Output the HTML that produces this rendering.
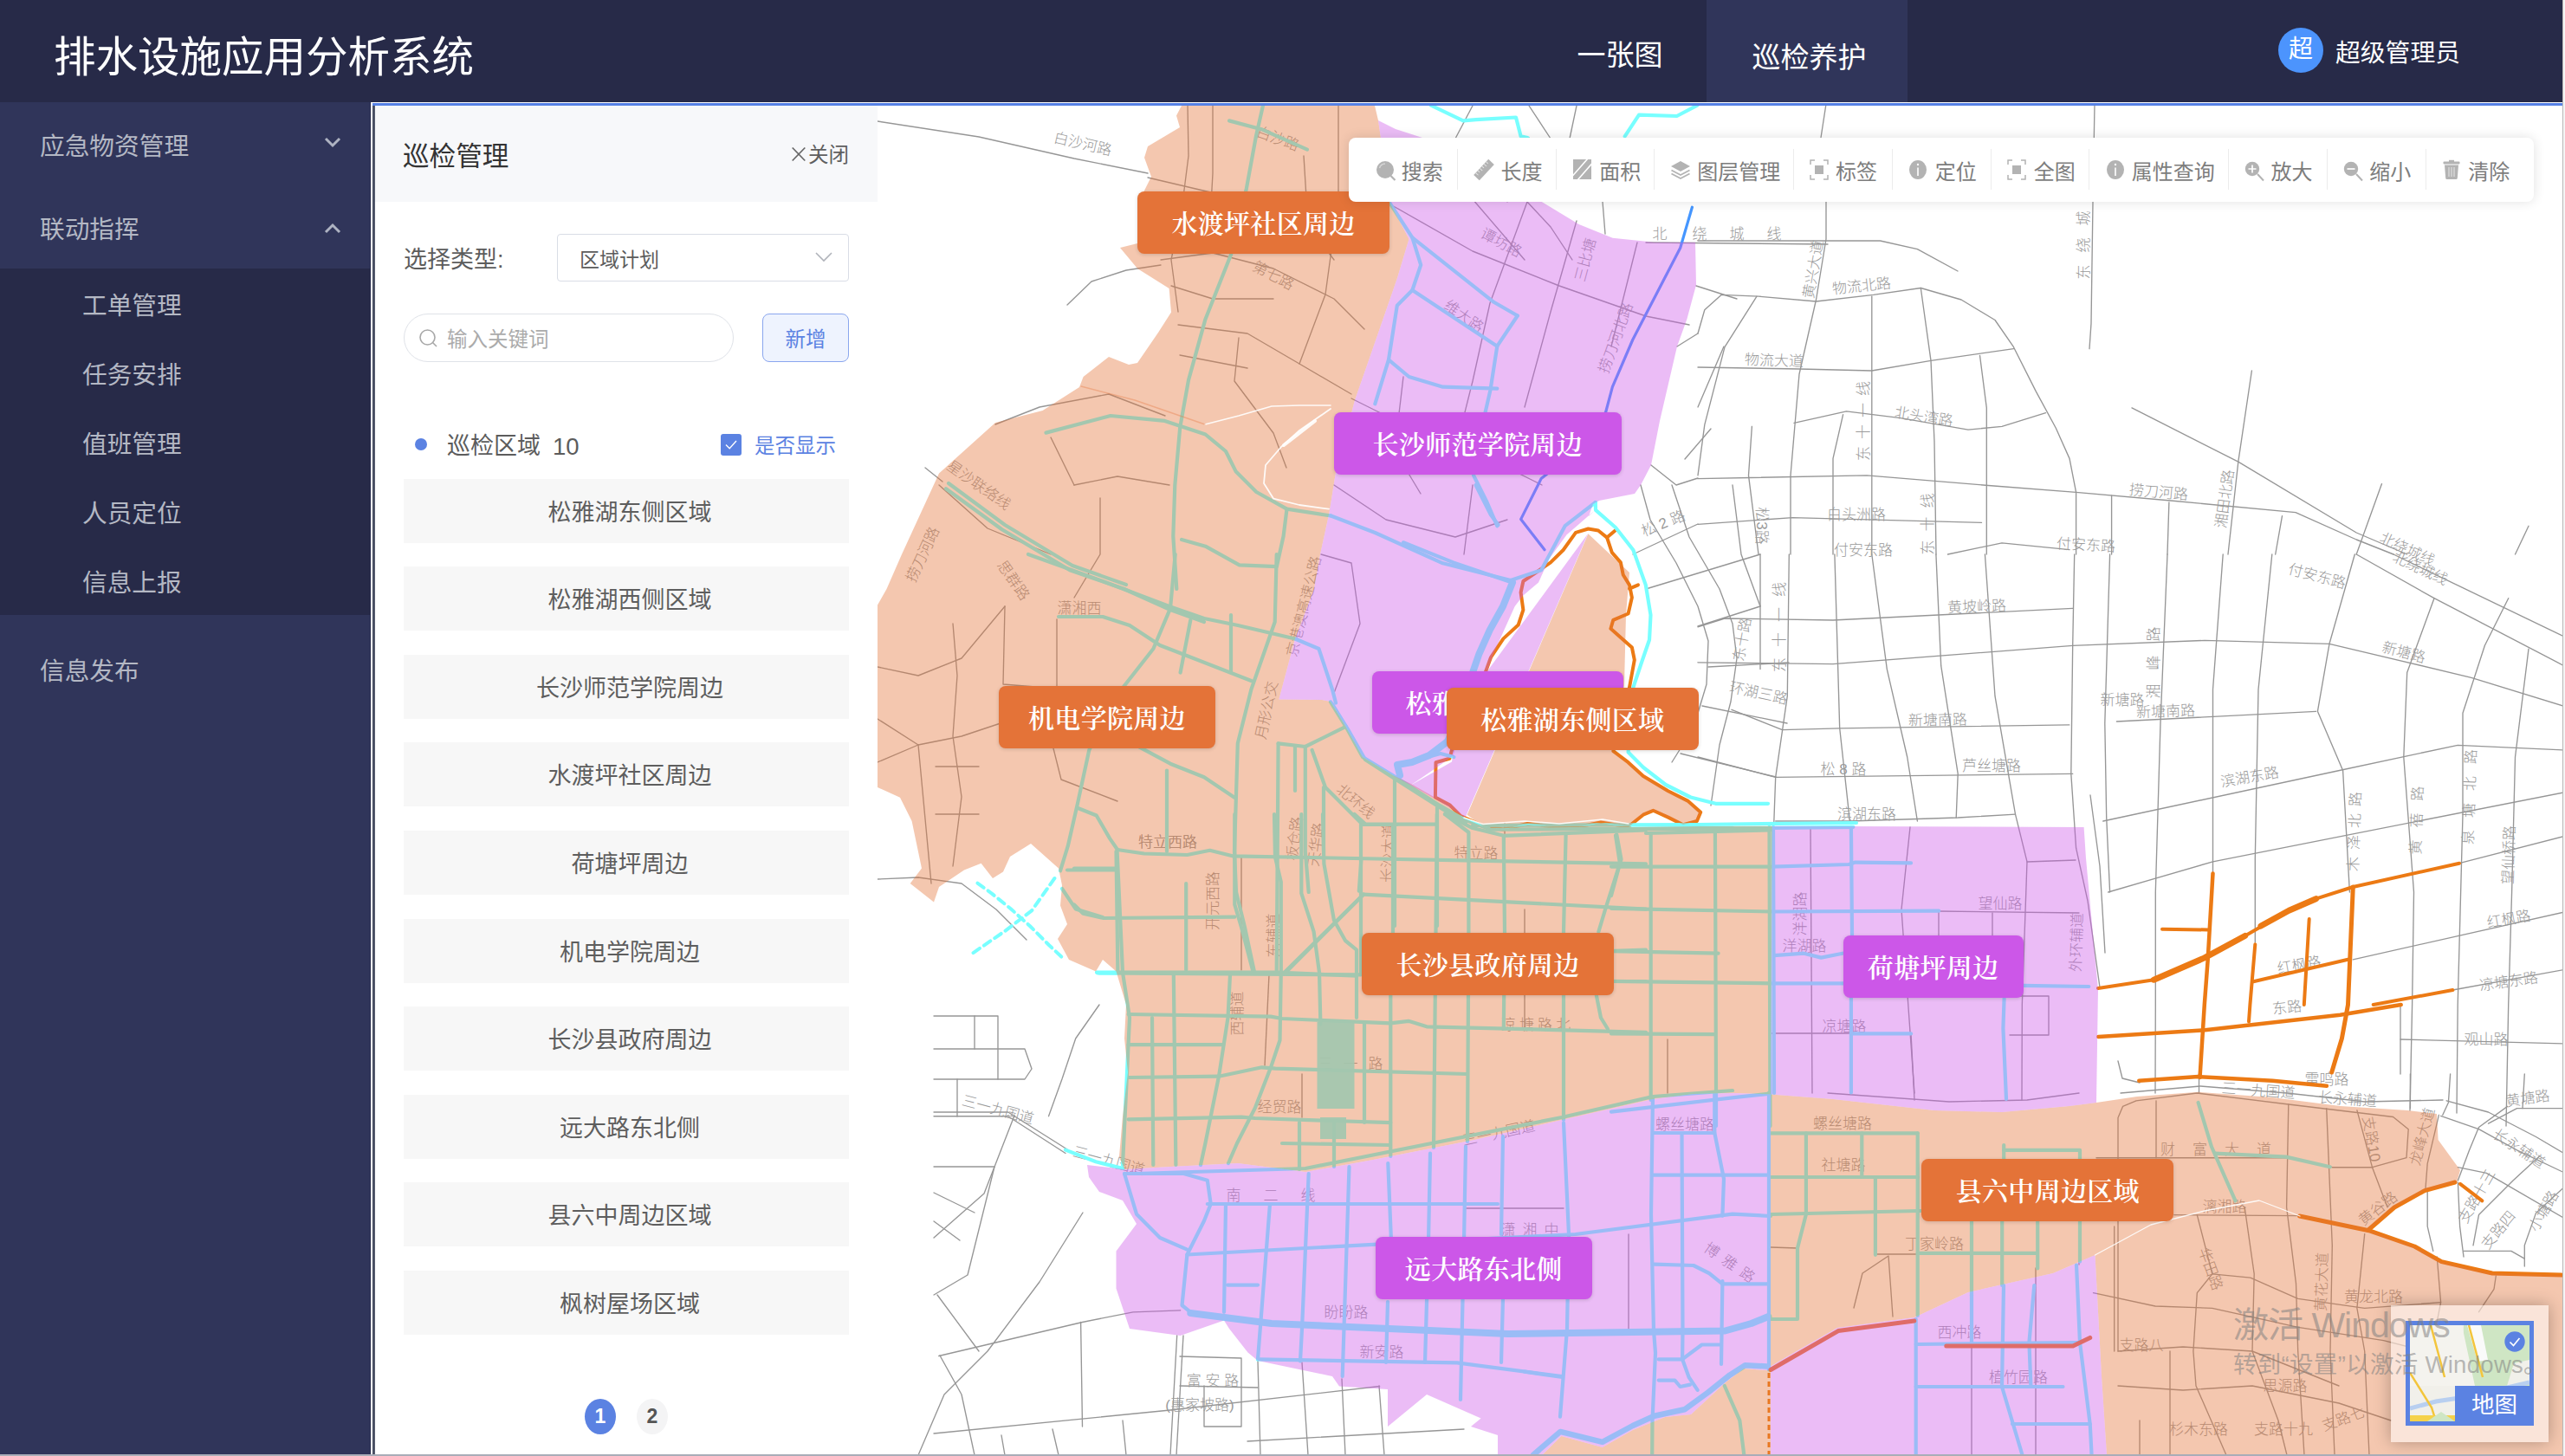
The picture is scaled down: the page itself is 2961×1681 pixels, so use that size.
<!DOCTYPE html>
<html lang="zh-CN">
<head>
<meta charset="utf-8">
<title>排水设施应用分析系统</title>
<style>
*{box-sizing:border-box;margin:0;padding:0}
html,body{width:2961px;height:1681px;overflow:hidden;background:#fff}
body{position:relative;font-family:"Liberation Sans","Noto Sans CJK SC",sans-serif;color:#333}
.abs{position:absolute}
#hdr{position:absolute;left:0;top:0;width:2958px;height:118px;background:#272a48}
#hdr .title{position:absolute;left:62px;top:0;height:118px;line-height:133px;font-size:48.5px;color:#fff;white-space:nowrap}
#hdr .nav{position:absolute;top:0;height:118px;line-height:127px;font-size:33px;color:#fff;text-align:center;white-space:nowrap}
#hdr .nav.on{background:#30355a}
#hdr .ava{position:absolute;left:2630px;top:32px;width:52px;height:52px;border-radius:50%;background:#4c94fd;color:#fff;font-size:28px;line-height:50px;text-align:center}
#hdr .uname{position:absolute;left:2696px;top:32px;height:52px;line-height:59px;font-size:28.8px;color:#fff;white-space:nowrap}
#rstrip{position:absolute;left:2958px;top:0;width:3px;height:1681px;background:#f4f4f4;border-left:1px solid #b8b8b8}
#side{position:absolute;left:0;top:118px;width:427px;height:1563px;background:#30355a}
#sidee{position:absolute;left:427px;top:118px;width:1px;height:1563px;background:#272b4d}
#side .sub{position:absolute;left:0;top:192px;width:427px;height:400px;background:#272a48}
#side .it{position:absolute;left:46px;font-size:28.7px;color:#b4b8c4;height:40px;line-height:44px;white-space:nowrap}
#side .it.s{left:95px}
#side svg{position:absolute}
#bluebar{position:absolute;left:430px;top:119px;width:2528px;height:3px;background:#5580e5}
#vline{position:absolute;left:430px;top:122px;width:3px;height:1559px;background:linear-gradient(90deg,#3f4559,#5b6174)}
#panel{position:absolute;left:433px;top:122px;width:580px;height:1559px;background:#fff}
#panel .ph{position:absolute;left:0;top:0;width:580px;height:111px;background:#f7f8fa}
#panel .pt{position:absolute;left:32px;top:33px;font-size:30.6px;line-height:50px;color:#333;white-space:nowrap}
#panel .pc{position:absolute;left:500px;top:36px;font-size:23.5px;line-height:42px;color:#5f5f5f;white-space:nowrap}
.lbl{position:absolute;white-space:nowrap}
#sel{position:absolute;left:210px;top:148px;width:337px;height:55px;border:1px solid #d9dde6;border-radius:4px;background:#fff}
#sel span{position:absolute;left:25px;top:0;line-height:58px;font-size:23px;color:#5c5c5c}
#srch{position:absolute;left:33px;top:240px;width:381px;height:56px;border:1px solid #dfe2e8;border-radius:28px;background:#fff}
#srch span{position:absolute;left:49px;top:0;line-height:59px;font-size:23.5px;color:#ababab}
#addb{position:absolute;left:447px;top:240px;width:100px;height:56px;border:1px solid #8aa6ee;border-radius:8px;background:#eef3fe;color:#5b82e2;font-size:23.5px;line-height:59px;text-align:center}
.li{position:absolute;left:33px;width:514px;height:74.2px;background:#f7f7f7;color:#5e5e5e;font-size:27px;line-height:79px;text-align:center;padding-left:8px;white-space:nowrap}
.pg{position:absolute;width:36px;height:41px;border-radius:50%;font-size:23px;font-weight:bold;line-height:41px;text-align:center;font-family:"Liberation Sans","DejaVu Sans",sans-serif}
#bline{position:absolute;left:0;top:1679px;width:2958px;height:2px;background:#a9adb8}
#map{position:absolute;left:1013px;top:122px;width:1945px;height:1558px;overflow:hidden;background:#fff}
#tb{position:absolute;left:1557px;top:159px;width:1368px;height:73.5px;background:#fff;border-radius:8px;box-shadow:0 0 14px rgba(0,0,0,.12)}
#tb .ti{position:absolute;top:0;height:73.5px;font-size:24px;color:#7d7d7d;line-height:79px;white-space:nowrap}
#tb .sp{position:absolute;top:13px;width:1px;height:47px;background:#ececec}
.ml{position:absolute;height:72px;border-radius:8px;color:#fff;font-family:"Liberation Serif","Noto Serif CJK SC",serif;font-weight:600;font-size:30px;line-height:76px;text-align:center;white-space:nowrap;box-shadow:0 1px 4px rgba(0,0,0,.16);letter-spacing:0.3px}
.ml.o{background:#e47338}
.ml.p{background:#cc57e8}
</style>
</head>
<body>
<div id="hdr">
  <div class="title">排水设施应用分析系统</div>
  <div class="nav" style="left:1770px;width:200px">一张图</div>
  <div class="nav on" style="left:1970px;width:232px;padding-left:5px;line-height:134px">巡检养护</div>
  <div class="ava">超</div>
  <div class="uname">超级管理员</div>
</div>
<div id="rstrip"></div>
<div id="side">
  <div class="sub"></div>
  <div class="it" style="top:29px">应急物资管理</div>
  <svg style="left:374px;top:40px" width="20" height="14" viewBox="0 0 20 14"><path d="M2 2 L10 10 L18 2" fill="none" stroke="#aeb3c2" stroke-width="3"/></svg>
  <div class="it" style="top:125px">联动指挥</div>
  <svg style="left:374px;top:138px" width="20" height="14" viewBox="0 0 20 14"><path d="M2 12 L10 4 L18 12" fill="none" stroke="#aeb3c2" stroke-width="3"/></svg>
  <div class="it s" style="top:213px">工单管理</div>
  <div class="it s" style="top:293px">任务安排</div>
  <div class="it s" style="top:373px">值班管理</div>
  <div class="it s" style="top:453px">人员定位</div>
  <div class="it s" style="top:533px">信息上报</div>
  <div class="it" style="top:635px">信息发布</div>
</div>
<div id="sidee"></div>
<div id="bluebar"></div>
<div id="vline"></div>
<div id="panel">
  <div class="ph"></div>
  <div class="pt">巡检管理</div>
  <svg style="position:absolute;left:480px;top:47px" width="18" height="18" viewBox="0 0 18 18"><path d="M1.7 1.5 L16.3 16.5 M16.3 1.5 L1.7 16.5" stroke="#666" stroke-width="1.7" fill="none"/></svg><div class="pc">关闭</div>
  <div class="lbl" style="left:33px;top:156px;font-size:27px;line-height:45px;color:#5c5c5c">选择类型:</div>
  <div id="sel"><span>区域计划</span>
    <svg style="position:absolute;left:295.6px;top:19.3px" width="22" height="14" viewBox="0 0 22 14"><path d="M2 2 L11 11 L20 2" fill="none" stroke="#b0b3ba" stroke-width="1.6"/></svg>
  </div>
  <div id="srch">
    <svg style="position:absolute;left:16px;top:16px" width="24" height="24" viewBox="0 0 24 24"><circle cx="10.5" cy="10.5" r="8.5" fill="none" stroke="#a8a8a8" stroke-width="1.6"/><path d="M16.5 16.5 L21 21" stroke="#a8a8a8" stroke-width="1.6"/></svg>
    <span>输入关键词</span></div>
  <div id="addb">新增</div>
  <div class="abs" style="left:46px;top:384px;width:14px;height:14px;border-radius:50%;background:#5b82e2"></div>
  <div class="lbl" style="left:83px;top:372px;font-size:27px;line-height:43px;color:#5c5c5c">巡检区域</div>
  <div class="lbl" style="left:205px;top:372px;font-size:27.5px;line-height:43px;color:#5c5c5c">10</div>
  <div class="abs" style="left:399px;top:379px;width:24px;height:25px;border-radius:3px;background:#5b82e2">
    <svg style="position:absolute;left:3px;top:4px" width="18" height="17" viewBox="0 0 18 17"><path d="M3 8.5 L7.2 12.8 L15 4" fill="none" stroke="#fff" stroke-width="1.4"/></svg>
  </div>
  <div class="lbl" style="left:438px;top:372px;font-size:23.5px;line-height:43px;color:#5b82e2">是否显示</div>
  <div class="li" style="top:430.5px">松雅湖东侧区域</div>
  <div class="li" style="top:532.1px">松雅湖西侧区域</div>
  <div class="li" style="top:633.7px">长沙师范学院周边</div>
  <div class="li" style="top:735.3px">水渡坪社区周边</div>
  <div class="li" style="top:836.9px">荷塘坪周边</div>
  <div class="li" style="top:938.5px">机电学院周边</div>
  <div class="li" style="top:1040.1px">长沙县政府周边</div>
  <div class="li" style="top:1141.7px">远大路东北侧</div>
  <div class="li" style="top:1243.3px">县六中周边区域</div>
  <div class="li" style="top:1344.9px">枫树屋场区域</div>
  <div class="pg" style="left:242px;top:1493px;background:#5b82e2;color:#fff">1</div>
  <div class="pg" style="left:302px;top:1493px;background:#f4f4f5;color:#555">2</div>
</div>
<div id="map">
<svg style="position:absolute;left:0;top:0" width="1945" height="1558" viewBox="1013 122 1945 1558" fill="none" stroke-linecap="round" stroke-linejoin="round">
<g stroke="#969696" stroke-width="1.35">
<polyline points="2108.0,120.0 2102.0,159.0 2108.0,233.0 2108.0,276.0 2096.5,346.0 2077.0,432.0 2067.0,549.0 2067.0,640.0" />
<polyline points="2418.0,120.0 2416.0,233.0 2414.0,373.4 2412.0,402.7" />
<polyline points="1960.0,278.0 2170.5,278.0 2213.4,287.6 2260.0,313.0" />
<polyline points="1960.0,385.0 1967.8,357.8 1987.3,340.3 2030.0,342.2 2096.5,348.0 2162.7,340.3 2217.3,332.5 2264.0,346.0 2303.0,369.5 2324.5,400.7 2350.0,451.4 2373.3,494.3 2389.0,529.4 2396.6,568.3 2396.6,640.0" />
<polyline points="1960.0,424.0 2077.0,426.0 2160.8,428.0 2229.0,416.3 2324.5,402.7" />
<polyline points="2160.8,342.2 2160.8,640.0" />
<polyline points="2217.3,332.5 2229.0,416.3 2233.0,510.0 2235.0,640.0" />
<polyline points="2285.5,410.4 2293.3,470.9 2293.3,640.0" />
<polyline points="2071.0,488.4 2131.5,474.8 2194.0,482.6 2272.0,496.2 2311.0,492.3 2361.6,476.7" />
<polyline points="1960.0,552.7 2155.0,548.8 2295.3,560.5 2396.6,568.3 2505.8,578.0 2650.0,591.7 2720.2,623.0 2763.0,640.0" />
<polyline points="1960.0,605.4 2069.2,597.6 2287.5,603.4" />
<polyline points="2028.0,342.2 1991.0,400.7 1967.8,490.4 1960.0,548.8" />
<polyline points="2022.4,492.3 2018.5,548.8 2030.0,640.0" />
<polyline points="2127.6,478.7 2116.0,529.4 2116.0,640.0" />
<polyline points="2461.0,470.9 2583.8,533.2 2720.2,615.0 2778.7,640.0" />
<polyline points="2599.4,428.0 2583.8,533.2 2572.0,640.0" />
<polyline points="2749.5,558.6 2720.2,640.0" />
<polyline points="2437.6,572.2 2437.6,640.0" />
<polyline points="2503.9,580.0 2502.0,640.0" />
<polyline points="2634.5,595.6 2626.7,640.0" />
<polyline points="2919.0,607.3 2903.5,640.0" />
<polyline points="2248.5,640.0 2311.0,626.8 2389.0,634.6" />
<polyline points="1960.0,723.8 1991.0,714.0 2116.0,716.0 2392.7,702.4" />
<polyline points="1960.0,764.8 2116.0,766.7 2392.7,745.3 2544.8,739.4 2689.0,743.3 2852.8,782.3 2960.0,815.4" />
<polyline points="1999.0,819.3 2057.5,842.7 2123.7,840.8 2388.8,836.9" />
<polyline points="2443.4,833.0 2673.5,821.3" />
<polyline points="1960.0,874.0 2049.7,897.3 2392.7,893.4" />
<polyline points="2049.7,948.0 2135.4,948.0 2260.2,944.0 2326.5,940.2" />
<polyline points="2032.0,640.0 2032.0,772.6" />
<polyline points="2065.3,640.0 2063.3,803.7 2049.7,897.3 2047.7,952.0" />
<polyline points="2117.9,640.0 2123.7,840.8 2135.4,948.0" />
<polyline points="2160.8,640.0 2178.3,772.6 2201.7,874.0 2213.4,948.0" />
<polyline points="2234.9,640.0 2240.7,768.7 2260.2,893.4 2258.2,944.0" />
<polyline points="2291.4,640.0 2303.0,803.7 2326.5,940.2 2340.0,994.8 2334.3,1160.0 2334.0,1270.0" />
<polyline points="2394.7,640.0 2392.7,745.3 2390.8,893.4 2396.6,979.2" />
<polyline points="2435.6,640.0 2429.8,835.0 2431.7,944.0 2435.6,1030.0" />
<polyline points="2502.0,640.0 2494.0,835.0 2488.3,1030.0 2488.3,1160.0 2488.0,1262.0" />
<polyline points="2566.2,640.0 2554.5,796.0 2554.5,1006.5" />
<polyline points="2622.8,640.0 2607.0,796.0 2603.3,991.0 2603.3,1088.0" />
<polyline points="2718.3,640.0 2689.0,743.3 2675.4,821.3 2704.6,889.5 2712.4,1030.0" />
<polyline points="2810.0,690.7 2778.7,776.5 2774.8,874.0 2786.5,1030.0 2784.6,1160.0 2782.0,1282.0" />
<polyline points="2895.7,690.7 2868.4,745.3 2843.0,823.2 2843.0,940.2 2837.2,1160.0 2836.0,1285.0" />
<polyline points="2919.0,749.2 2903.5,874.0 2899.6,1030.0 2895.7,1160.0 2893.0,1300.0" />
<polyline points="2720.2,640.0 2810.0,690.7 2960.0,768.7" />
<polyline points="2763.0,640.0 2960.0,735.0" />
<polyline points="2427.8,948.0 2700.7,889.5 2837.2,860.3 2960.0,866.0" />
<polyline points="2433.7,1030.0 2554.5,994.8 2712.4,963.6 2960.0,914.8" />
<polyline points="2839.0,996.7 2960.0,965.5" />
<polyline points="2716.3,1107.8 2960.0,1053.0" />
<polyline points="2831.4,1143.0 2960.0,1119.5" />
<polyline points="2396.6,979.2 2410.0,1040.0 2424.0,1140.0" />
<polyline points="2413.0,918.0 2424.0,1000.0 2430.0,1100.0" />
<polyline points="2445.0,1225.0 2450.0,1245.0 2470.0,1250.0" />
<polyline points="2817.6,1288.4 2861.5,1303.7 2905.5,1327.9 2961.0,1354.3" />
<polyline points="2824.2,1270.8 2872.5,1284.0 2927.5,1312.5 2961.0,1332.3" />
<polyline points="2837.4,1347.7 2870.3,1354.3 2961.0,1407.0" />
<polyline points="2894.5,1277.4 2861.5,1301.5 2850.5,1327.9 2837.4,1363.0" />
<polyline points="2961.0,1279.6 2905.5,1279.6 2872.5,1297.1" />
<polyline points="2931.9,1334.5 2901.0,1363.0 2861.5,1402.6 2855.0,1437.8" />
<polyline points="2961.0,1369.7 2927.5,1400.4 2914.3,1437.8 2914.3,1462.0" />
<polyline points="2802.2,1371.9 2802.2,1415.8 2808.8,1444.4" />
<polyline points="2837.4,1365.3 2839.6,1415.8 2844.0,1451.0" />
<polyline points="2844.0,1444.4 2898.9,1444.4 2914.3,1453.2" />
<polyline points="2782.4,1240.0 2782.4,1279.6" />
<polyline points="2828.6,1240.0 2826.4,1273.0 2819.8,1287.3" />
<polyline points="2914.3,1240.0 2912.0,1279.6" />
<polyline points="2771.0,1200.0 2960.0,1205.0" />
<polyline points="2771.0,1160.0 2771.0,1240.0" />
<polyline points="2448.0,1262.0 2540.0,1254.0 2640.0,1262.0 2730.0,1272.0 2820.0,1270.0" />
<polyline points="1894.0,560.0 1905.0,600.0 1935.0,650.0 1960.0,700.0 1972.0,740.0 1970.0,790.0 1955.0,840.0 1930.0,880.0" />
<polyline points="1930.0,560.0 1950.0,620.0 1985.0,680.0 2000.0,720.0 2005.0,760.0 1998.0,810.0 1985.0,860.0 1975.0,930.0" />
<polyline points="1885.0,640.0 1960.0,605.0" />
<polyline points="1900.0,680.0 2032.0,640.0" />
<polyline points="1960.0,723.0 2032.0,700.0" />
<polyline points="1972.0,770.0 2065.0,765.0" />
<polyline points="1965.0,815.0 2063.0,835.0" />
<polyline points="1940.0,870.0 2050.0,897.0" />
<polyline points="2000.0,560.0 2010.0,640.0 2032.0,700.0" />
<polyline points="1078.0,1288.7 1163.7,1288.7 1230.0,1331.5" />
<polyline points="1078.0,1284.0 1163.7,1284.0 1232.0,1327.0" />
<polyline points="1269.0,1160.0 1241.7,1199.0 1226.0,1245.8 1210.5,1288.7" />
<polyline points="1083.8,1565.5 1249.5,1526.5 1308.0,1514.8 1362.6,1512.8" />
<polyline points="1078.0,1655.0 1351.0,1628.0 1592.6,1600.5" />
<polyline points="1358.7,1542.0 1351.0,1680.0" />
<polyline points="1366.0,1542.0 1358.0,1680.0" />
<polyline points="1247.6,1526.5 1249.5,1647.0" />
<polyline points="1078.0,1347.0 1148.0,1347.0 1117.0,1472.0 1078.0,1495.0" />
<polyline points="1171.0,1288.0 1136.0,1378.0 1078.0,1429.0" />
<polyline points="1078.0,1173.0 1152.0,1173.0 1152.0,1246.0 1105.0,1246.0 1105.0,1289.0" />
<polyline points="1078.0,1211.0 1183.0,1211.0 1191.0,1234.0 1183.0,1246.0 1152.0,1246.0" />
<polyline points="1125.0,1173.0 1125.0,1211.0" />
<polyline points="1078.0,1246.0 1105.0,1246.0" />
<polyline points="1078.0,1377.0 1125.0,1400.0" />
<polyline points="1078.0,1410.0 1108.0,1432.0" />
<polyline points="1082.0,1495.0 1130.0,1560.0" />
<polyline points="1085.0,1565.0 1110.0,1610.0 1125.0,1680.0" />
<polyline points="1156.0,1657.0 1160.0,1680.0" />
<polyline points="1215.0,1650.0 1222.0,1680.0" />
<polyline points="1296.0,1640.0 1300.0,1680.0" />
<polyline points="1362.0,1566.0 1433.0,1568.0 1433.0,1647.0 1390.0,1647.0 1390.0,1600.0" />
<polyline points="1362.0,1600.0 1452.0,1602.0" />
<polyline points="1452.0,1571.0 1455.0,1680.0" />
<polyline points="1503.0,1573.0 1510.0,1680.0" />
<polyline points="1549.0,1592.0 1553.0,1680.0" />
<polyline points="1592.0,1600.0 1598.0,1680.0" />
<polyline points="1440.0,1664.0 1690.0,1650.0" />
<polyline points="1013.0,1015.0 1060.0,1013.0 1110.0,1020.0 1150.0,1050.0 1185.0,1085.0" />
<polyline points="1060.0,1680.0 1090.0,1610.0 1140.0,1560.0 1200.0,1480.0 1250.0,1400.0" />
<polyline points="1013.0,140.0 1130.0,158.0 1240.0,183.0 1325.0,200.0" />
<polyline points="1232.0,352.0 1260.0,325.0 1300.0,312.0 1340.0,306.0" />
<polyline points="1068.0,540.0 1088.0,556.0" />
<polyline points="1700.0,122.0 1680.0,160.0" />
<polyline points="1765.0,122.0 1790.0,160.0" />
<polyline points="1820.0,122.0 1812.0,160.0" />
<polyline points="1763.0,233.0 1790.0,262.0 1815.0,300.0" />
<polyline points="1850.0,233.0 1853.0,270.0" />
<polyline points="1765.0,159.0 1740.0,233.0" />
<polyline points="1900.0,280.0 2110.0,282.0" />
<polyline points="1958.0,330.0 2005.0,345.0" />
<polyline points="1936.0,400.0 1960.0,385.0" />
<polyline points="1990.0,400.0 1960.0,470.0" />
<polyline points="1975.0,495.0 1945.0,530.0" />
<polyline points="1906.0,537.0 1935.0,560.0 1960.0,552.0" />
<polyline points="1371.0,122.0 1372.0,180.0 1365.0,235.0 1352.0,300.0 1360.0,360.0" />
<polyline points="1400.0,122.0 1400.0,200.0 1395.0,290.0" />
<polyline points="1505.0,180.0 1510.0,260.0 1540.0,300.0" />
<polyline points="1545.0,122.0 1545.0,230.0 1530.0,340.0 1500.0,420.0" />
<polyline points="1325.0,205.0 1440.0,232.0 1587.0,262.0" />
<polyline points="1340.0,300.0 1400.0,292.0 1470.0,310.0 1540.0,345.0 1575.0,380.0" />
<polyline points="1352.0,330.0 1400.0,345.0 1470.0,345.0" />
<polyline points="1360.0,375.0 1440.0,385.0 1500.0,420.0 1560.0,455.0" />
<polyline points="1362.0,410.0 1440.0,425.0" />
<polyline points="1430.0,390.0 1425.0,440.0 1470.0,500.0 1485.0,540.0" />
<polyline points="1149.0,490.0 1200.0,470.0 1280.0,455.0 1345.0,480.0" />
<polyline points="1213.0,505.0 1240.0,560.0" />
<polyline points="1240.0,560.0 1290.0,550.0 1350.0,560.0" />
<polyline points="1270.0,575.0 1270.0,640.0 1240.0,690.0" />
<polyline points="1084.0,560.0 1140.0,610.0 1213.0,640.0" />
<polyline points="1013.0,770.0 1060.0,780.0 1110.0,760.0 1160.0,700.0" />
<polyline points="1013.0,880.0 1060.0,860.0 1110.0,850.0 1170.0,830.0" />
<polyline points="1100.0,720.0 1105.0,780.0 1100.0,850.0 1110.0,920.0 1100.0,1000.0" />
<polyline points="1160.0,700.0 1158.0,790.0 1220.0,795.0" />
<polyline points="1220.0,715.0 1220.0,795.0 1290.0,800.0" />
<polyline points="1060.0,860.0 1075.0,1020.0" />
<polyline points="1013.0,830.0 1060.0,860.0" />
<polyline points="1080.0,885.0 1130.0,885.0" />
<polyline points="1080.0,940.0 1130.0,940.0" />
<polyline points="1215.0,860.0 1225.0,900.0 1290.0,925.0" />
<polyline points="1433.0,990.0 1433.0,1120.0" />
<polyline points="1465.0,1125.0 1460.0,1230.0" />
<polyline points="1503.0,1240.0 1503.0,1290.0" />
<polyline points="1737.0,950.0 1737.0,1000.0" />
<polyline points="1925.0,1200.0 1925.0,1262.0" />
<polyline points="1760.0,1050.0 1760.0,1190.0" />
<polyline points="1690.0,1395.0 1805.0,1395.0" />
<polyline points="1880.0,1425.0 1880.0,1540.0" />
<polyline points="1605.0,236.0 1700.0,290.0 1800.0,330.0 1900.0,365.0 1950.0,375.0" />
<polyline points="1763.0,233.0 1720.0,350.0 1700.0,440.0 1680.0,520.0" />
<polyline points="1640.0,160.0 1700.0,230.0 1760.0,300.0" />
<polyline points="1820.0,255.0 1790.0,360.0 1760.0,470.0" />
<polyline points="1890.0,280.0 1860.0,400.0" />
<polyline points="1560.0,460.0 1620.0,490.0 1700.0,520.0 1780.0,560.0" />
<polyline points="1620.0,435.0 1610.0,520.0 1640.0,570.0" />
<polyline points="1540.0,560.0 1600.0,600.0 1680.0,620.0 1740.0,600.0" />
<polyline points="1700.0,560.0 1690.0,640.0" />
<polyline points="1525.0,640.0 1560.0,650.0 1570.0,720.0 1540.0,800.0" />
<polyline points="2090.0,955.0 2092.0,1262.0" />
<polyline points="2205.0,955.0 2195.0,1050.0 2210.0,1262.0" />
<polyline points="2238.0,1052.0 2238.0,1080.0" />
<polyline points="2238.0,1052.0 2400.0,1054.0" />
<polyline points="2300.0,1054.0 2300.0,1080.0" />
<polyline points="2045.0,1193.0 2137.0,1193.0" />
<polyline points="2206.0,1193.0 2210.0,1270.0" />
<polyline points="2340.0,995.0 2396.0,993.0" />
<polyline points="2320.0,1150.0 2365.0,1150.0 2365.0,1195.0 2320.0,1195.0" />
<polyline points="2110.0,1262.0 2250.0,1272.0 2340.0,1270.0 2400.0,1262.0" />
<polyline points="2445.0,1560.0 2445.0,1290.5 2450.5,1277.4 2466.0,1270.8 2536.3,1262.0 2641.8,1275.0 2762.6,1289.5 2780.2,1303.7 2778.0,1336.7 2738.5,1347.7 2692.3,1347.7 2641.8,1336.7 2488.0,1336.7 2420.0,1336.7" />
<polyline points="2489.0,1270.8 2489.0,1336.7" />
<polyline points="2538.5,1240.0 2538.5,1262.0" />
<polyline points="2641.8,1275.0 2639.6,1393.8 2650.5,1481.8 2652.7,1560.0 2660.0,1680.0" />
<polyline points="2685.7,1279.6 2692.3,1437.8 2690.0,1560.0 2695.0,1680.0" />
<polyline points="2720.9,1281.8 2738.5,1347.7 2756.0,1393.8" />
<polyline points="2815.4,1287.3 2802.2,1343.3 2800.0,1371.9" />
<polyline points="2509.9,1402.6 2652.7,1403.7" />
<polyline points="2536.3,1402.6 2553.8,1470.8 2536.3,1492.7 2531.9,1560.0 2535.0,1600.0 2570.0,1680.0" />
<polyline points="2591.2,1393.8 2602.2,1470.8 2600.0,1560.0 2630.0,1640.0 2640.0,1680.0" />
<polyline points="2553.8,1470.8 2597.8,1475.2 2652.7,1499.3 2729.7,1510.3 2817.6,1503.7" />
<polyline points="2416.5,1492.7 2488.0,1508.0 2553.8,1510.3 2652.7,1532.3 2751.6,1547.7 2800.0,1560.0" />
<polyline points="2729.7,1424.6 2720.9,1510.3 2729.7,1560.0 2735.0,1680.0" />
<polyline points="2813.2,1451.0 2817.6,1503.7 2806.6,1560.0" />
<polyline points="2881.3,1473.0 2879.0,1488.3 2861.5,1514.7" />
<polyline points="2440.7,1415.8 2440.7,1560.0" />
<polyline points="2445.0,1560.0 2520.0,1555.0 2600.0,1560.0 2700.0,1600.0" />
<polyline points="2445.0,1600.0 2520.0,1605.0 2600.0,1600.0 2700.0,1620.0 2760.0,1640.0" />
<polyline points="2505.0,1560.0 2505.0,1680.0" />
<polyline points="2470.0,1640.0 2470.0,1680.0" />
<polyline points="2400.0,1400.0 2400.0,1460.0" />
<polyline points="2044.0,1440.0 2075.0,1441.0" />
<polyline points="2140.0,1510.0 2150.0,1470.0 2180.0,1450.0 2185.0,1520.0" />
<polyline points="2164.9,1448.0 2280.0,1448.0" />
<polyline points="2350.0,1464.0 2350.0,1680.0" />
<polyline points="2276.0,1550.0 2276.0,1680.0" />
</g>
<g fill="#9a9a9a" stroke="none" font-size="17" font-weight="300" text-anchor="middle" font-family="Liberation Sans,Noto Sans CJK SC,sans-serif">
<text x="1916" y="276">北</text>
<text x="1962" y="276">绕</text>
<text x="2005" y="276">城</text>
<text x="2048" y="276">线</text>
<text x="2093" y="317" transform="rotate(-80 2093 311)">黄兴大道</text>
<text x="2149" y="336" transform="rotate(-6 2149 330)">物流北路</text>
<text x="2405" y="282" transform="rotate(-90 2405 276)" letter-spacing="14">东绕城</text>
<text x="2048" y="422" transform="rotate(2 2048 416)">物流大道</text>
<text x="2151" y="488" transform="rotate(-90 2151 482)" letter-spacing="8">东十一线</text>
<text x="2221" y="487" transform="rotate(9 2221 481)">北头湾路</text>
<text x="2143" y="600">白头洲路</text>
<text x="2151" y="641">付安东路</text>
<text x="2408" y="635" transform="rotate(3 2408 629)">付安东路</text>
<text x="2492" y="574" transform="rotate(5 2492 568)">捞刀河路</text>
<text x="2568" y="582" transform="rotate(-82 2568 576)">湘田北路</text>
<text x="2779" y="640" transform="rotate(25 2779 634)">北绕城线</text>
<text x="2034" y="613" transform="rotate(90 2034 607)">松3路</text>
<text x="2225" y="606" transform="rotate(-90 2225 600)" letter-spacing="10">东十线</text>
<text x="2282" y="706" transform="rotate(-2 2282 700)">黄坡岭路</text>
<text x="2675" y="671" transform="rotate(15 2675 665)">付安东路</text>
<text x="2794" y="662" transform="rotate(25 2794 656)">北绕城线</text>
<text x="2775" y="759" transform="rotate(15 2775 753)">新塘路</text>
<text x="2237" y="837" transform="rotate(-1 2237 831)">新塘南路</text>
<text x="2500" y="827" transform="rotate(-2 2500 821)">新塘南路</text>
<text x="2299" y="890">芦丝塘路</text>
<text x="2128" y="894">松 8 路</text>
<text x="2155" y="946">滨湖东路</text>
<text x="2597" y="903" transform="rotate(-10 2597 897)">滨湖东路</text>
<text x="2030" y="806" transform="rotate(12 2030 800)">环湖三路</text>
<text x="2054" y="724" transform="rotate(-90 2054 718)" letter-spacing="12">东十一线</text>
<text x="2011" y="744" transform="rotate(-80 2011 738)">东十路</text>
<text x="2486" y="763" transform="rotate(-90 2486 757)" letter-spacing="16">湘峰路</text>
<text x="2718" y="962" transform="rotate(-88 2718 956)" letter-spacing="8">木泽北路</text>
<text x="2790" y="946" transform="rotate(-88 2790 940)" letter-spacing="14">黄蓓路</text>
<text x="2851" y="919" transform="rotate(-88 2851 913)" letter-spacing="14">泉塘北路</text>
<text x="2309" y="1049">望仙路</text>
<text x="2083" y="1098">洋湖路</text>
<text x="2896" y="993" transform="rotate(-88 2896 987)">望仙桥路</text>
<text x="2896" y="1067" transform="rotate(-10 2896 1061)">红枫路</text>
<text x="2654" y="1120" transform="rotate(-10 2654 1114)">红枫路</text>
<text x="2896" y="1139" transform="rotate(-8 2896 1133)">凉塘东路</text>
<text x="2397" y="1094" transform="rotate(-88 2397 1088)">外环辅道</text>
<text x="2129" y="1191">凉塘路</text>
<text x="2078" y="1061" transform="rotate(-90 2078 1055)">洋湖路</text>
<text x="1250" y="172" transform="rotate(13 1250 166)">白沙河路</text>
<text x="1920" y="610" transform="rotate(-22 1920 604)">松 2 路</text>
<text x="2870" y="1206">观山路</text>
<text x="2918" y="1274" transform="rotate(-8 2918 1268)">黄塘路</text>
<text x="2640" y="1169" transform="rotate(-6 2640 1163)">东路</text>
<text x="1152" y="1287" transform="rotate(15 1152 1281)">三一九国道</text>
<text x="1280" y="1346" transform="rotate(15 1280 1340)">三一九国道</text>
<text x="1400" y="1600">富 安 路</text>
<text x="1385" y="1628">(惠家坡路)</text>
<text x="1348" y="978">特立西路</text>
<text x="1704" y="991">特立路</text>
<text x="1554" y="1521">盼盼路</text>
<text x="1595" y="1567">新安路</text>
<text x="1477" y="1284">经贸路</text>
<text x="2127" y="1303">螺丝塘路</text>
<text x="1945" y="1304">螺丝塘路</text>
<text x="2128" y="1351">社塘路</text>
<text x="2233" y="1442">丁家岭路</text>
<text x="2568" y="1333" letter-spacing="20">财富大道</text>
<text x="2568" y="1399">漓湘路</text>
<text x="2740" y="1503">黄龙北路</text>
<text x="2638" y="1606">思源路</text>
<text x="2472" y="1559">支路八</text>
<text x="2538" y="1656">杉木东路</text>
<text x="2636" y="1656">支路十九</text>
<text x="2705" y="1644" transform="rotate(-20 2705 1638)">支路七</text>
<text x="2552" y="1471" transform="rotate(70 2552 1465)">华田路</text>
<text x="2680" y="1486" transform="rotate(-88 2680 1480)">黄花大道</text>
<text x="2745" y="1401" transform="rotate(-38 2745 1395)">黄谷路</text>
<text x="2262" y="1544">西冲路</text>
<text x="2330" y="1596">植竹园路</text>
<text x="1775" y="1189" letter-spacing="4">凉塘路北</text>
<text x="1565" y="1234" letter-spacing="12">三一路</text>
<text x="1730" y="1314" transform="rotate(-12 1730 1308)">三一九国道</text>
<text x="1400" y="1046" transform="rotate(-90 1400 1040)">开元西路</text>
<text x="1470" y="1086" transform="rotate(-90 1470 1080)">东辅道</text>
<text x="1428" y="1176" transform="rotate(-90 1428 1170)">西辅道</text>
<text x="1494" y="974" transform="rotate(-82 1494 968)">板仓路</text>
<text x="1519" y="981" transform="rotate(-82 1519 975)">天华路</text>
<text x="1565" y="931" transform="rotate(40 1565 925)">北环线</text>
<text x="1602" y="991" transform="rotate(-88 1602 985)">长沙大道</text>
<text x="1462" y="826" transform="rotate(-78 1462 820)">月形公交</text>
<text x="1505" y="706" transform="rotate(-76 1505 700)">京港澳高速公路</text>
<text x="1246" y="708">潇湘西</text>
<text x="1348" y="978">特立西路</text>
<text x="1170" y="676" transform="rotate(55 1170 670)">思群路</text>
<text x="1065" y="646" transform="rotate(-65 1065 640)">捞刀河路</text>
<text x="1130" y="566" transform="rotate(35 1130 560)">星沙联络线</text>
<text x="2000" y="1466" transform="rotate(35 2000 1460)" letter-spacing="8">博雅路</text>
<text x="1733" y="286" transform="rotate(28 1733 280)">谭坊路</text>
<text x="1830" y="306" transform="rotate(-75 1830 300)">三比塘</text>
<text x="1690" y="371" transform="rotate(35 1690 365)">维大路</text>
<text x="1865" y="396" transform="rotate(-70 1865 390)">捞刀河北路</text>
<text x="1470" y="324" transform="rotate(28 1470 318)">第七路</text>
<text x="1475" y="166" transform="rotate(20 1475 160)">白沙路</text>
<text x="2908" y="1332" transform="rotate(33 2908 1326)">长永辅道</text>
<text x="2859" y="1387" transform="rotate(-60 2859 1381)">支路十三</text>
<text x="2884" y="1426" transform="rotate(-50 2884 1420)">支路四</text>
<text x="2936" y="1404" transform="rotate(-60 2936 1398)">小塘路</text>
<text x="2607" y="1265" transform="rotate(4 2607 1259)">三一九国道</text>
<text x="2710" y="1275" transform="rotate(4 2710 1269)">长永辅道</text>
<text x="2686" y="1252">雷鸣路</text>
<text x="2738" y="1321" transform="rotate(80 2738 1315)">支路10</text>
<text x="2796" y="1318" transform="rotate(-75 2796 1312)">龙峰大道</text>
<text x="1480" y="1386" letter-spacing="26">南二线</text>
<text x="1770" y="1426" letter-spacing="8">潇湘中</text>
<text x="2450" y="814">新塘路</text>
</g>
<g stroke="#ec7a14">
<polyline points="1833.4,610.5 1819.0,614.8 1804.6,635.0 1790.0,649.4 1758.4,671.0 1755.6,684.0 1758.4,704.2 1752.7,721.5 1735.4,737.4 1721.0,759.0 1715.2,774.9 1700.0,815.0 1686.0,845.0 1676.0,865.7 1673.4,875.8 1657.5,880.2 1656.9,920.5 1673.4,929.2 1686.3,942.2 1712.3,953.7 1735.4,957.5 1764.2,950.8 1793.0,954.6 1821.9,954.6 1847.9,949.4 1879.6,954.6 1896.9,940.7 1908.4,935.8 1925.7,943.6 1943.0,952.3 1958.9,948.0 1963.2,937.8 1948.8,924.9 1925.7,913.3 1896.9,896.0 1879.6,880.2 1862.3,867.2 1872.0,830.0 1881.0,793.6 1886.8,761.9 1883.9,747.5 1870.9,735.9 1859.4,725.8 1862.3,715.8 1879.6,708.5 1883.9,689.8 1881.0,675.4 1873.8,663.8 1870.9,649.4 1860.8,637.9 1855.1,620.6 1845.0,612.5 1833.4,610.5" stroke-width="4"/>
<polyline points="1855.1,620.6 1865.2,612.0" stroke-width="4"/>
<polyline points="1881.0,679.7 1891.0,675.4" stroke-width="4"/>
<polyline points="2422.0,1141.0 2486.3,1131.2 2544.8,1105.9 2591.6,1080.5 2642.3,1051.3 2673.5,1037.7 2716.3,1024.0 2839.0,996.7" stroke-width="4"/>
<polyline points="2486.3,1131.2 2544.8,1105.9 2591.6,1080.5" stroke-width="7"/>
<polyline points="2610.0,1069.0 2642.3,1051.3 2673.5,1037.7" stroke-width="7"/>
<polyline points="2554.5,1008.4 2548.7,1107.8 2544.8,1160.0 2539.5,1244.0" stroke-width="4.5"/>
<polyline points="2496.0,1072.7 2548.7,1073.5" stroke-width="4"/>
<polyline points="2716.3,1024.0 2710.5,1160.0 2703.4,1199.0 2691.7,1238.0" stroke-width="5"/>
<polyline points="2665.7,1061.0 2659.8,1160.0" stroke-width="4"/>
<polyline points="2603.3,1090.3 2597.4,1160.0 2596.0,1179.5" stroke-width="4"/>
<polyline points="2601.3,1133.2 2710.5,1107.8" stroke-width="4"/>
<polyline points="2739.7,1160.0 2831.4,1143.0" stroke-width="4"/>
<polyline points="2422.4,1197.0 2545.4,1189.3 2701.5,1171.7 2771.7,1160.0" stroke-width="4.5"/>
<polyline points="2469.3,1247.8 2537.6,1243.0 2623.4,1247.8 2685.9,1253.7" stroke-width="4.5"/>
<polyline points="2834.0,1365.0 2799.0,1374.6 2764.0,1394.0 2734.6,1419.5" stroke-width="5"/>
<polyline points="2654.6,1404.0 2734.6,1420.7 2787.3,1439.0 2818.5,1456.6 2877.0,1470.0 2957.0,1472.0" stroke-width="5"/>
<polyline points="2840.0,1366.8 2865.4,1386.3" stroke-width="4"/>
</g>
<g stroke="#78ffff" stroke-width="4.2">
<polyline points="1290.0,981.0 1320.7,985.5 1370.5,987.0 1396.6,981.8 1422.7,988.3 1900.0,997.4" />
<polyline points="1240.0,1002.6 1289.6,1002.6" />
<polyline points="1240.0,1044.4 1250.4,1054.8 1274.0,1060.0 1425.3,1058.7" />
<polyline points="1574.0,1032.6 1900.0,1049.6" />
<polyline points="1574.0,1032.6 1482.7,1122.7" />
<polyline points="1266.0,1122.7 1475.0,1122.7 1566.0,1126.6" />
<polyline points="1302.6,1171.0 1467.0,1173.6 1480.0,1176.0 1605.0,1181.4 1626.0,1178.8 1647.0,1185.3 1900.0,1191.8" />
<polyline points="1302.6,1206.2 1412.2,1206.2" />
<polyline points="1302.6,1244.0 1407.0,1242.7 1456.6,1232.3 1472.3,1233.6 1694.0,1240.0" />
<polyline points="1302.6,1292.3 1433.0,1289.7 1448.8,1291.0 1605.3,1296.2" />
<polyline points="1863.7,1097.9 1900.0,1096.6" />
<polyline points="1863.7,1133.0 1900.0,1133.0" />
<polyline points="1289.6,983.0 1296.0,1122.7 1304.0,1175.0 1296.0,1345.0" />
<polyline points="1330.0,1175.0 1331.3,1345.0" />
<polyline points="1354.8,1125.3 1357.4,1345.0" />
<polyline points="1369.2,1020.0 1369.2,1120.0" />
<polyline points="1425.3,940.0 1425.3,1044.4 1433.0,1070.5 1446.0,1120.0" />
<polyline points="1420.0,1125.3 1417.5,1175.0 1407.0,1242.7 1391.4,1320.0 1386.0,1345.0" />
<polyline points="1471.0,940.0 1472.0,989.6 1478.8,1018.3 1478.8,1122.7 1477.5,1201.0 1467.0,1232.3 1448.8,1279.2 1428.0,1320.0 1418.0,1343.0" />
<polyline points="1502.3,940.0 1502.3,1031.3 1516.6,1075.7 1523.0,1122.7 1524.4,1182.7" />
<polyline points="1527.0,940.0 1528.4,997.4 1540.0,1062.6 1553.0,1086.0 1566.0,1096.6 1566.0,1175.0" />
<polyline points="1571.4,992.2 1568.8,1028.7" />
<polyline points="1563.6,940.0 1576.6,951.7 1657.5,951.7" />
<polyline points="1608.0,953.0 1608.0,1075.7 1605.3,1148.8 1605.3,1335.0" />
<polyline points="1658.8,940.0 1657.5,1075.7 1655.0,1325.0" />
<polyline points="1668.0,940.0 1695.4,961.0 1695.4,1075.7 1694.0,1318.0" />
<polyline points="1735.8,966.0 1737.0,1075.7 1735.8,1188.0" />
<polyline points="1807.6,963.5 1805.0,1075.7 1805.0,1293.0" />
<polyline points="1866.3,963.5 1871.5,992.2 1853.2,1049.6 1845.4,1075.7" />
<polyline points="1842.8,1148.8 1848.0,1175.0 1856.0,1188.0" />
<polyline points="1668.0,940.0 1699.0,955.7 1735.8,964.8 1900.0,958.3" />
<polyline points="1480.0,1320.0 1605.0,1322.0" />
<polyline points="1500.0,1296.0 1500.0,1350.0" />
<polyline points="1540.0,1296.0 1540.0,1347.0" />
<polyline points="1575.0,1181.0 1575.0,1296.0" />
<polyline points="1860.0,957.3 2045.4,956.0 2139.4,954.8" />
<polyline points="1900.0,962.0 2043.0,958.5" />
<polyline points="1860.0,1000.6 2045.4,1000.6 2134.4,998.0 2141.8,995.6 2206.0,996.4" />
<polyline points="1860.0,1048.8 2045.4,1052.5 2238.2,1051.7" />
<polyline points="1860.0,1098.2 1983.6,1100.7" />
<polyline points="2047.9,1103.2 2082.5,1100.7 2102.3,1105.6 2127.0,1100.7" />
<polyline points="1860.0,1132.8 2045.4,1135.3 2127.0,1135.3 2334.7,1137.8 2411.3,1139.0" />
<polyline points="1860.0,1193.4 1978.7,1194.1" />
<polyline points="2136.9,1193.4 2206.0,1193.4" />
<polyline points="1905.7,962.2 1905.7,1270.0" />
<polyline points="1979.9,957.3 1981.0,1256.4 1981.0,1300.0" />
<polyline points="2042.5,954.8 2043.5,1300.0" />
<polyline points="2047.0,954.8 2048.0,1262.0" />
<polyline points="2136.9,954.8 2138.0,1078.4 2136.9,1152.6 2136.9,1261.4" />
<polyline points="2313.6,1152.6 2312.4,1187.2 2316.0,1268.8" />
<polyline points="1865.0,964.7 1870.0,996.9 1860.0,1034.0" />
<polyline points="1860.0,1283.6 2008.3,1266.3 2043.0,1262.6" />
<polyline points="1419.0,139.4 1456.0,149.2 1509.0,172.6" />
<polyline points="1458.0,121.7 1450.0,157.0 1438.5,219.6 1421.0,294.0 1391.5,368.4 1372.0,438.9 1362.2,493.7 1356.3,560.3 1354.3,619.0 1358.3,680.0" />
<polyline points="1207.5,499.6 1282.0,480.0 1344.6,485.9 1391.5,501.5 1415.0,521.0 1426.8,544.6 1450.3,568.0 1485.5,587.7 1536.4,595.5" />
<polyline points="1485.5,587.7 1481.6,619.0 1473.8,654.2 1430.7,652.3 1391.5,630.7 1364.0,623.0" />
<polyline points="1092.0,564.2 1156.6,611.2 1235.0,658.2 1297.6,680.0" />
<polyline points="1095.0,558.0 1160.0,606.0 1238.0,653.0 1300.0,675.0" />
<polyline points="1187.0,640.0 1273.0,671.0 1351.0,700.4 1390.0,714.0 1429.0,722.0 1495.0,737.5" />
<polyline points="1297.6,680.0 1351.0,704.0 1390.0,718.0" />
<polyline points="1222.0,712.0 1273.0,712.0 1304.0,722.0 1339.0,745.0 1370.0,757.0 1444.4,786.0" />
<polyline points="1356.7,640.0 1351.0,702.4 1331.4,749.0 1288.5,803.7 1257.3,866.0 1243.8,928.4 1232.8,976.7 1224.0,1005.3" />
<polyline points="1243.8,932.7 1265.7,941.5 1281.0,967.9 1290.0,981.0" />
<polyline points="1288.5,983.0 1290.4,1123.4" />
<polyline points="1347.0,889.5 1347.0,983.0" />
<polyline points="1300.0,854.4 1351.0,881.7 1390.0,897.3 1425.0,920.7" />
<polyline points="1473.7,640.0 1471.7,718.0 1444.4,796.0 1428.8,858.3 1425.0,983.0 1427.0,1030.0 1436.6,1069.0 1448.3,1123.4" />
<polyline points="1421.0,710.0 1421.0,776.5" />
<polyline points="1374.3,716.0 1362.6,776.5" />
<polyline points="1475.6,858.3 1473.7,1123.4" />
<polyline points="1495.0,862.0 1495.0,913.0" />
<polyline points="1506.8,862.0 1506.8,983.0 1510.7,1030.0" />
<polyline points="1475.6,858.3 1506.8,862.0 1553.6,838.8" />
<polyline points="1514.6,866.0 1530.0,909.0 1573.0,952.0 1612.0,952.0" />
<polyline points="1528.0,909.0 1528.0,983.0" />
<polyline points="1571.0,952.0 1571.0,1123.4" />
<polyline points="1610.0,897.3 1610.0,1069.0" />
<polyline points="1659.0,932.4 1659.0,1069.0" />
<polyline points="1232.0,1004.5 1288.5,1004.5" />
<polyline points="1226.0,1026.0 1241.7,1049.4 1273.0,1059.0" />
<polyline points="1269.0,1123.4 1571.0,1125.4" />
<polyline points="1573.0,1033.8 1483.4,1123.4" />
<polyline points="1536.0,810.4 1553.6,838.8 1573.0,874.0 1608.0,895.4 1662.8,930.4 1690.0,946.0 1721.0,957.7 2000.0,955.8" />
<polyline points="1538.0,813.0 1556.0,842.0 1576.0,877.0 1610.0,899.0 1665.0,934.0 1692.0,950.0" />
<polyline points="1605.0,235.3 1630.4,274.4 1640.2,305.8 1630.4,335.0 1612.8,352.8 1603.0,415.4 1587.3,466.3" />
<polyline points="1630.4,274.4 1724.4,348.8 1751.8,364.5" />
<polyline points="1630.4,335.0 1728.3,399.7 1751.8,364.5" />
<polyline points="1728.3,399.7 1720.4,450.6 1714.6,476.0" />
<polyline points="1603.0,415.4 1626.5,435.0 1665.6,446.7 1728.3,448.7" />
<polyline points="1700.9,548.5 1716.5,579.8 1728.3,607.2" />
<polyline points="1536.4,595.5 1587.3,615.0 1665.6,650.3 1743.9,670.0 1779.2,658.2 1806.6,607.2 1841.8,580.0" />
<polyline points="1620.0,626.3 1677.7,649.4 1741.0,671.0" />
<polyline points="1703.6,560.0 1721.0,594.6 1729.6,606.0" />
<polyline points="1495.0,737.5 1522.4,749.0 1538.0,796.0 1542.0,811.5" />
<polyline points="1620.0,881.7 1662.8,870.0 1678.4,874.0" />
<polyline points="1393.8,1390.0 1729.0,1390.0" />
<polyline points="1370.4,1448.5 1584.8,1436.8 1818.7,1425.0 2000.0,1401.7 2044.0,1404.0" />
<polyline points="1417.0,1483.6 1452.0,1483.6" />
<polyline points="1452.0,1569.4 1682.0,1573.3 1803.0,1589.0" />
<polyline points="1415.0,1390.0 1413.0,1514.8" />
<polyline points="1466.0,1390.0 1452.0,1569.4" />
<polyline points="1510.7,1355.0 1503.0,1534.3 1501.0,1571.3" />
<polyline points="1557.5,1347.0 1549.7,1589.0" />
<polyline points="1602.3,1343.0 1606.0,1433.0" />
<polyline points="1602.0,1503.0 1600.0,1573.0" />
<polyline points="1651.0,1331.5 1649.0,1433.0 1645.0,1573.0" />
<polyline points="1692.0,1323.7 1690.0,1433.0 1686.0,1616.0" />
<polyline points="1735.0,1312.0 1733.0,1425.0" />
<polyline points="1735.0,1499.0 1733.0,1573.0" />
<polyline points="1805.0,1296.5 1811.0,1425.0 1809.0,1534.3 1801.0,1635.6" />
<polyline points="1908.0,1266.0 1906.0,1401.7 1909.0,1536.2 1911.0,1562.0 1907.5,1640.0 1907.2,1680.0" />
<polyline points="1941.5,1308.0 1942.5,1536.2 1942.1,1569.3 1949.6,1590.0 1959.6,1604.9" />
<polyline points="1908.0,1308.0 1979.3,1308.0" />
<polyline points="1908.0,1356.6 2041.4,1356.6" />
<polyline points="1909.7,1459.6 1955.0,1461.0 1973.0,1470.0 1988.4,1482.3 2040.0,1482.3" />
<polyline points="1298.0,1355.0 1312.0,1401.7 1339.0,1429.0 1370.4,1442.6" />
<polyline points="1298.0,1355.0 1366.5,1355.0 1393.8,1362.7 1397.7,1390.0 1390.0,1409.5 1370.4,1448.5 1364.5,1507.0 1374.3,1514.8" />
<polyline points="1914.7,1569.3 1942.1,1569.3 1964.6,1552.5 1987.0,1552.5" />
<polyline points="1914.7,1593.6 1933.4,1593.6 1939.6,1601.0 1950.9,1598.6" />
<polyline points="1760.0,1583.7 1803.7,1590.0" />
<polyline points="1990.8,1600.0 2008.3,1639.8 2013.3,1679.7" />
<polyline points="1979.3,1262.0 1979.3,1308.0 1990.0,1361.0 1988.4,1403.6" />
<polyline points="1988.4,1479.0 1987.0,1575.0" />
<polyline points="2042.0,1261.5 2042.0,1581.5" />
<polyline points="1310.7,1355.0 1507.0,1349.0 1803.0,1290.0 1908.0,1266.0 2000.0,1259.0" />
<polyline points="2044.0,1308.3 2213.7,1308.3" />
<polyline points="2044.0,1359.0 2213.7,1359.0" />
<polyline points="2044.0,1402.0 2213.7,1398.0 2280.0,1398.0" />
<polyline points="2084.9,1308.3 2084.9,1402.0 2075.0,1441.0 2075.0,1523.0 2044.0,1523.0" />
<polyline points="2149.3,1308.3 2149.3,1359.0" />
<polyline points="2164.9,1359.0 2164.9,1448.8" />
<polyline points="2213.7,1308.3 2213.7,1519.0" />
<polyline points="2213.7,1446.8 2350.2,1446.8" />
<polyline points="2276.0,1409.8 2276.0,1495.6" />
<polyline points="2311.2,1409.8 2311.2,1484.0" />
<polyline points="2352.2,1409.8 2352.2,1464.4" />
<polyline points="2313.2,1327.8 2401.0,1327.8 2401.0,1456.6" />
<polyline points="2313.2,1322.0 2313.2,1338.0" />
<polyline points="2537.6,1273.0 2553.0,1324.0 2580.5,1386.3" />
<polyline points="2557.0,1331.7 2639.0,1335.6 2689.8,1347.3" />
<polyline points="2211.7,1523.0 2211.7,1680.0" />
<polyline points="2211.7,1552.0 2401.0,1550.0" />
<polyline points="2276.0,1495.6 2276.0,1550.0" />
<polyline points="2313.0,1484.0 2311.0,1601.0 2334.6,1680.0" />
<polyline points="2348.3,1484.0 2342.4,1550.0 2344.4,1601.0" />
<polyline points="2397.0,1460.5 2401.0,1550.0 2412.7,1644.0 2414.6,1680.0" />
<polyline points="2211.7,1601.0 2381.5,1601.0" />
<polyline points="2323.0,1644.0 2412.7,1644.0" />
<polyline points="1652.0,121.7 1689.0,139.4 1703.8,138.2 1750.0,135.5 1755.6,157.3 1763.5,159.0" />
<polyline points="1959.3,121.7 1935.7,134.0 1892.0,132.7 1875.7,157.3" />
<polyline points="1841.8,580.0 1842.0,588.8 1865.0,609.0 1885.4,635.0 1899.8,675.4 1905.5,710.0 1904.0,738.8 1894.0,767.7 1885.4,793.6 1879.6,868.6 1897.0,886.0 1922.9,906.0 1951.7,920.5 1980.5,927.8 2041.0,927.8" />
<polyline points="1700.0,953.0 1960.0,952.0 2143.0,950.0" />
<polyline points="1267.0,1123.4 1288.5,1123.4" />
<polyline points="1230.0,1327.6 1265.0,1341.3 1296.3,1349.0" />
</g>
<g stroke="#78ffff" stroke-width="8">
<polyline points="1374.3,1516.0 1467.8,1528.0 1740.7,1540.0 1991.4,1536.5 2021.7,1528.0 2041.4,1520.0" />
<polyline points="1746.0,672.4 1735.0,700.0 1719.8,727.4 1707.5,754.8 1700.6,774.8 1688.0,820.0 1671.0,856.0 1650.0,872.0 1630.0,880.0 1613.0,883.0 1616.0,895.0" />
<polyline points="1770.0,1679.7 1801.2,1652.9 1849.8,1664.8 1884.8,1646.0 1909.7,1634.8 1944.6,1627.3 1972.0,1607.4 1997.0,1587.4 2014.5,1576.2 2039.5,1577.4" stroke-width="6.5"/>
</g>
<g stroke="#78ffff" stroke-width="4" stroke-dasharray="9 6">
<polyline points="1128.4,1019.6 1144.9,1031.6 1166.8,1049.2 1188.8,1069.0 1210.8,1091.0 1229.5,1108.6" />
<polyline points="1217.4,1014.0 1191.0,1051.4 1160.0,1075.0 1120.7,1102.0" />
</g>
<rect x="1520.5" y="1180" width="43" height="100" fill="#78ffff" opacity="0.92"/>
<rect x="1524" y="1290" width="30" height="25" fill="#78ffff" opacity="0.92"/>
<g stroke="#4596ff" stroke-width="3.2">
<polyline points="1953.4,239.2 1939.7,286.2 1884.9,392.0 1861.4,446.7 1853.6,476.0 1820.0,520.0 1779.2,552.4 1755.7,599.4 1783.0,634.7" />
</g>
<g stroke="#ec7a14" stroke-width="5">
<polyline points="2044.0,1581.5 2122.0,1536.6 2209.8,1525.0" />
<polyline points="2246.8,1554.0 2393.0,1554.0 2412.7,1544.4" />
<polyline points="2042.0,1585.0 2042.0,1680.0" stroke-width="3" stroke-dasharray="6 4" stroke-linecap="butt"/>
</g>
<g fill="#e47338" fill-opacity="0.4" stroke="none">
<polygon points="1364.0,122.0 1587.0,122.0 1591.0,139.0 1605.0,235.0 1626.5,276.0 1613.0,321.0 1587.0,396.0 1564.0,462.0 1542.0,545.0 1534.5,592.0 1524.0,640.0 1517.0,680.0 1495.0,737.5 1476.4,807.6 1526.0,808.0 1536.0,810.0 1553.6,839.0 1573.0,874.0 1608.0,895.0 1629.0,905.0 1657.0,921.0 1673.0,930.0 1690.0,945.0 1712.0,954.0 1735.0,957.5 1764.0,952.0 1793.0,955.0 1822.0,955.0 1848.0,950.0 1880.0,955.0 1960.0,954.0 2045.8,953.8 2044.0,1263.4 2000.0,1262.0 1955.0,1263.0 1908.0,1269.0 1803.0,1293.0 1702.0,1316.0 1585.0,1339.0 1507.0,1353.0 1429.0,1343.0 1351.0,1347.0 1298.0,1350.0 1292.0,1335.0 1296.0,1289.0 1302.0,1238.0 1298.0,1199.0 1300.0,1160.0 1288.5,1121.5 1273.0,1108.0 1265.0,1121.5 1234.0,1108.0 1221.0,1084.0 1232.0,1067.0 1224.0,1045.5 1226.0,1022.0 1222.0,1002.6 1190.0,974.0 1166.0,989.0 1158.0,1006.5 1146.0,1014.0 1132.6,996.7 1113.0,1004.5 1084.0,1024.0 1078.0,1041.6 1050.7,1020.0 1064.0,1002.6 1052.6,948.0 1039.0,920.7 1013.0,909.0 1013.0,698.5 1023.5,680.0 1041.0,640.0 1084.0,546.6 1149.0,488.0 1203.6,474.0 1246.0,447.0 1250.6,435.0 1280.0,412.0 1303.0,421.0 1313.0,419.0 1337.0,384.0 1352.0,360.6 1349.6,333.0 1313.0,310.0 1293.0,286.0 1313.0,281.0 1314.0,228.0 1320.0,222.0 1329.0,204.0 1321.0,182.0 1325.0,169.0 1362.0,147.0 1358.0,133.5" />
<polygon points="1833.4,616.2 1881.0,661.0 1877.0,710.0 1875.0,791.0 1862.0,867.0 1880.0,880.0 1897.0,896.0 1926.0,913.0 1949.0,925.0 1963.0,938.0 1959.0,948.0 1943.0,952.0 1926.0,944.0 1908.0,936.0 1897.0,941.0 1880.0,955.0 1848.0,949.0 1822.0,955.0 1793.0,955.0 1764.0,951.0 1735.0,957.5 1712.0,954.0 1693.6,940.7" />
<polygon points="2044.0,1263.4 2116.0,1269.0 2233.0,1282.0 2311.0,1284.0 2389.0,1277.0 2420.0,1273.0 2467.0,1266.0 2537.6,1260.7 2623.0,1267.0 2701.5,1277.0 2779.5,1282.0 2813.0,1286.0 2814.6,1316.0 2840.0,1351.0 2836.0,1365.0 2799.0,1374.6 2764.0,1394.0 2735.0,1420.0 2787.3,1439.0 2818.5,1456.6 2877.0,1470.0 2958.0,1472.0 2958.0,1680.0 2432.0,1680.0 2426.0,1589.0 2418.5,1449.0 2370.0,1470.0 2272.0,1492.0 2210.0,1521.0 2121.0,1533.0 2060.0,1568.0 2044.0,1577.5" />
<polygon points="1780.0,1680.0 1802.4,1657.9 1849.8,1671.0 1884.8,1651.0 1922.2,1636.0 1952.0,1633.0 1992.0,1596.0 2013.0,1580.0 2044.0,1582.4 2044.0,1680.0" />
</g>
<g fill="#cc57e8" fill-opacity="0.4" stroke="none">
<polygon points="1591.0,139.0 1611.0,149.0 1642.0,159.0 1716.0,197.0 1779.8,233.0 1822.7,259.0 1861.6,274.8 1910.0,279.7 1957.0,279.7 1958.0,329.0 1947.5,368.0 1936.0,400.0 1916.0,486.0 1906.0,537.0 1894.0,560.0 1887.0,570.0 1846.0,578.0 1839.0,582.0 1834.0,596.0 1840.0,590.0 1822.9,605.0 1808.4,617.5 1788.5,645.0 1776.0,672.4 1758.3,687.5 1748.7,700.0 1736.3,727.4 1724.0,754.8 1717.0,774.8 1690.0,822.0 1677.7,872.5 1655.0,888.5 1628.6,906.5 1608.0,895.0 1573.0,874.0 1553.6,839.0 1536.0,810.0 1526.0,808.0 1476.4,807.6 1495.0,737.5 1517.0,680.0 1524.0,640.0 1534.5,592.0 1542.0,545.0 1564.0,462.0 1587.0,396.0 1613.0,321.0 1626.5,276.0 1605.0,235.0" />
<polygon points="1833.2,616.1 1717.0,774.8 1684.0,822.0 1676.0,879.5 1655.0,891.5 1628.6,906.5 1657.0,922.5 1673.0,932.0 1690.0,943.6 1692.0,942.7" />
<polygon points="2045.8,953.8 2405.6,955.0 2408.0,991.0 2422.0,1143.0 2421.7,1160.0 2420.0,1273.0 2389.0,1277.0 2311.0,1284.0 2233.0,1282.0 2116.0,1269.0 2044.0,1263.4" />
<polygon points="1298.0,1350.0 1351.0,1347.0 1429.0,1343.0 1507.0,1353.0 1585.0,1339.0 1702.0,1316.0 1803.0,1293.0 1908.0,1269.0 1955.0,1263.0 2000.0,1262.0 2044.0,1263.4 2044.0,1582.4 2013.0,1580.0 1992.0,1596.0 1952.0,1633.0 1922.2,1636.0 1884.8,1651.0 1849.8,1671.0 1802.4,1657.9 1780.0,1680.0 1729.0,1680.0 1729.0,1657.0 1698.0,1647.0 1709.6,1637.6 1647.0,1610.0 1602.0,1647.0 1602.0,1604.0 1546.0,1600.5 1538.0,1589.0 1452.0,1571.0 1440.5,1561.6 1419.0,1534.0 1413.0,1524.5 1362.6,1542.0 1304.0,1534.0 1288.5,1487.5 1288.5,1444.6 1312.0,1413.0 1296.0,1386.0 1269.0,1376.0 1257.0,1359.0 1255.0,1345.0" />
<polygon points="2044.0,1577.5 2060.0,1568.0 2121.0,1533.0 2210.0,1521.0 2272.0,1492.0 2370.0,1470.0 2418.5,1449.0 2426.0,1589.0 2432.0,1680.0 2044.0,1680.0" />
</g>
<g stroke="#fff" fill="none" stroke-opacity="0.9">
<polyline points="1391.0,490.0 1430.0,480.0 1468.0,469.0 1500.0,468.0 1536.0,468.0" stroke-width="1.6"/>
<polyline points="1536.0,472.0 1500.0,497.0 1479.0,516.0 1461.0,537.0 1459.0,558.0 1470.0,575.6 1500.0,583.0 1534.0,587.7" stroke-width="1.8"/>
<polyline points="1518.0,486.0 1482.0,514.0" stroke-width="4"/>
<polyline points="2418.5,1449.0 2483.0,1414.0 2545.0,1398.0 2608.0,1386.0 2655.0,1404.0" stroke-width="1.3"/>
<polyline points="1690.0,944.0 1712.0,951.5 1760.0,948.0 1800.0,951.0 1850.0,946.0 1880.0,951.0" stroke-width="1.5"/>
</g>
<g stroke="#e47338" fill="none" stroke-opacity="0.35">
<polyline points="1248.0,446.0 1310.0,462.0 1391.0,490.0" stroke-width="1.5"/>
</g>
</svg>
</div>
<div class="ml o" style="left:1313px;top:220.8px;width:291px">水渡坪社区周边</div>
<div class="ml p" style="left:1539.5px;top:476px;width:332.5px">长沙师范学院周边</div>
<div class="ml o" style="left:1153.2px;top:792.3px;width:249.5px">机电学院周边</div>
<div class="ml p" style="left:1583.6px;top:775.3px;width:290px">松雅湖西侧区域</div>
<div class="ml o" style="left:1669.8px;top:794px;width:291px">松雅湖东侧区域</div>
<div class="ml o" style="left:1572px;top:1076.6px;width:291px">长沙县政府周边</div>
<div class="ml p" style="left:2127.6px;top:1080.3px;width:208px">荷塘坪周边</div>
<div class="ml p" style="left:1588px;top:1428.4px;width:249.5px">远大路东北侧</div>
<div class="ml o" style="left:2218.3px;top:1337.6px;width:291px">县六中周边区域</div>
<div id="tb">
<div class="abs" style="left:31.0px;top:25.5px;width:26px;height:26px;line-height:0"><svg width="26" height="26" viewBox="0 0 26 26"><circle cx="11" cy="11" r="10" fill="#b3b3b3"/><path d="M4.5 9 A7 7 0 0 1 11 4" stroke="#d6d6d6" stroke-width="1.5" fill="none"/><path d="M17.5 18 L22.5 23" stroke="#b3b3b3" stroke-width="2.2"/></svg></div>
<div class="ti" style="left:60.7px">搜索</div>
<div class="sp" style="left:125.0px"></div>
<div class="abs" style="left:142.7px;top:24.3px;width:26px;height:26px;line-height:0"><svg width="26" height="26" viewBox="0 0 26 26"><g transform="rotate(-47 13 13)"><rect x="0.5" y="8.5" width="25" height="9" fill="#b3b3b3"/><path d="M4 8.5v4M7.5 8.5v3M11 8.5v4M14.5 8.5v3M18 8.5v4M21.5 8.5v3" stroke="#e6e6e6" stroke-width="1"/></g></svg></div>
<div class="ti" style="left:175.4px">长度</div>
<div class="sp" style="left:239.4px"></div>
<div class="abs" style="left:258.5px;top:25.0px;width:22px;height:24px;line-height:0"><svg width="22" height="24" viewBox="0 0 22 24"><rect x="0" y="0" width="21" height="23" fill="#b3b3b3"/><path d="M-1 19.5 L17 -1 M5 24 L22 4.5" stroke="#fff" stroke-width="1.6"/></svg></div>
<div class="ti" style="left:289.3px">面积</div>
<div class="sp" style="left:352.4px"></div>
<div class="abs" style="left:371.0px;top:25.0px;width:24px;height:24px;line-height:0"><svg width="24" height="24" viewBox="0 0 24 24"><path d="M12 2 L23 8 L12 14 L1 8 Z" fill="#b3b3b3"/><path d="M1.5 12.5 L12 18 L22.5 12.5 M1.5 16.5 L12 22 L22.5 16.5" stroke="#b3b3b3" stroke-width="1.8" fill="none"/></svg></div>
<div class="ti" style="left:402.3px">图层管理</div>
<div class="sp" style="left:512.7px"></div>
<div class="abs" style="left:532.3px;top:25.0px;width:22px;height:24px;line-height:0"><svg width="22" height="24" viewBox="0 0 22 24"><path d="M1 6 V1 H6 M16 1 H21 V6 M21 18 V23 H16 M6 23 H1 V18" stroke="#b3b3b3" stroke-width="1.5" fill="none"/><rect x="6" y="7" width="10" height="10" fill="#b3b3b3"/></svg></div>
<div class="ti" style="left:562.1px">标签</div>
<div class="sp" style="left:627.3px"></div>
<div class="abs" style="left:646.2px;top:25.0px;width:22px;height:24px;line-height:0"><svg width="22" height="24" viewBox="0 0 22 24"><ellipse cx="11" cy="12" rx="10" ry="11" fill="#b3b3b3"/><path d="M11 9.5 V19" stroke="#fff" stroke-width="1.6"/><circle cx="11" cy="6" r="1.2" fill="#fff"/></svg></div>
<div class="ti" style="left:676.8px">定位</div>
<div class="sp" style="left:741.3px"></div>
<div class="abs" style="left:760.0px;top:25.0px;width:22px;height:24px;line-height:0"><svg width="22" height="24" viewBox="0 0 22 24"><path d="M1 6 V1 H6 M16 1 H21 V6 M21 18 V23 H16 M6 23 H1 V18" stroke="#b3b3b3" stroke-width="1.5" fill="none"/><rect x="6" y="7" width="10" height="10" fill="#b3b3b3"/></svg></div>
<div class="ti" style="left:790.8px">全图</div>
<div class="sp" style="left:854.4px"></div>
<div class="abs" style="left:874.0px;top:25.0px;width:22px;height:24px;line-height:0"><svg width="22" height="24" viewBox="0 0 22 24"><ellipse cx="11" cy="12" rx="10" ry="11" fill="#b3b3b3"/><path d="M11 9.5 V19" stroke="#fff" stroke-width="1.6"/><circle cx="11" cy="6" r="1.2" fill="#fff"/></svg></div>
<div class="ti" style="left:903.8px">属性查询</div>
<div class="sp" style="left:1014.7px"></div>
<div class="abs" style="left:1033.5px;top:26.5px;width:26px;height:26px;line-height:0"><svg width="26" height="26" viewBox="0 0 26 26"><circle cx="9" cy="9" r="8.2" fill="#b3b3b3"/><path d="M4.5 9 H13.5 M9 4.5 V13.5" stroke="#fff" stroke-width="1.7"/><path d="M15 15 L22 22.5" stroke="#b3b3b3" stroke-width="2"/></svg></div>
<div class="ti" style="left:1064.6px">放大</div>
<div class="sp" style="left:1128.7px"></div>
<div class="abs" style="left:1147.5px;top:26.5px;width:26px;height:26px;line-height:0"><svg width="26" height="26" viewBox="0 0 26 26"><circle cx="9" cy="9" r="8.2" fill="#b3b3b3"/><path d="M4.5 9 H13.5" stroke="#fff" stroke-width="1.7"/><path d="M15 15 L22 22.5" stroke="#b3b3b3" stroke-width="2"/></svg></div>
<div class="ti" style="left:1178.2px">缩小</div>
<div class="sp" style="left:1243.3px"></div>
<div class="abs" style="left:1262.8px;top:25.0px;width:20px;height:24px;line-height:0"><svg width="20" height="24" viewBox="0 0 20 24"><path d="M7 0.8 H13 V3 H7 Z" fill="#b3b3b3"/><rect x="0.5" y="2.5" width="19" height="3" rx="1" fill="#b3b3b3"/><path d="M2 6.5 H18 L16.8 21.5 Q16.7 23 15.2 23 H4.8 Q3.3 23 3.2 21.5 Z" fill="#b3b3b3"/><path d="M7 9 V20 M10 9 V20 M13 9 V20" stroke="#e2e2e2" stroke-width="1.1"/></svg></div>
<div class="ti" style="left:1292.2px">清除</div>
</div>
<div class="abs" style="left:2760px;top:1506.5px;width:182px;height:158px;background:rgba(255,255,255,.52);box-shadow:0 0 18px rgba(0,0,0,.28)"></div>
<div class="abs" style="left:2777px;top:1525px;width:148px;height:121px;background:#5b82e2">
 <svg class="abs" style="left:5px;top:5px" width="138" height="111" viewBox="0 0 138 111">
  <rect width="138" height="111" fill="#f1f0ea"/>
  <path d="M62 0 L138 0 L138 40 L120 44 L112 70 L138 66 L138 70 L60 80 Z" fill="#cfe6c4"/>
  <path d="M0 0 H60 L75 70 L0 70 Z" fill="#f4f3ee"/>
  <path d="M66 0 L82 0 L90 40 L78 42 Z" fill="#fafafa"/>
  <path d="M0 96 L30 88 L70 82 L138 66" stroke="#b8cff0" stroke-width="5" fill="none"/>
  <path d="M0 55 L25 95 L30 111 M24 0 L40 60 M68 0 L84 60 M0 111 L50 108" stroke="#f3c53c" stroke-width="2.5" fill="none"/>
  <path d="M0 104 H52 V111 H0 Z" fill="#f5d24a"/>
  <path d="M20 111 L36 100 L52 111" fill="#cfe6c4"/>
 </svg>
 <div class="abs" style="left:57px;top:75px;width:91px;height:46px;background:#5b82e2;color:#fff;font-size:26.5px;line-height:44px;text-align:center">地图</div>
 <svg class="abs" style="left:113.5px;top:11.5px" width="24" height="24" viewBox="0 0 24 24"><circle cx="12" cy="12" r="11.7" fill="#5b82e2"/><path d="M6.5 12.5 L10.5 16.5 L17.5 8" stroke="#fff" stroke-width="1.7" fill="none"/></svg>
</div>
<div class="abs" style="left:2578px;top:1500px;font-size:41px;line-height:60px;color:rgba(128,128,128,.55);white-space:nowrap;letter-spacing:-1px">激活 Windows</div>
<div class="abs" style="left:2578px;top:1554px;font-size:27.5px;line-height:44px;color:rgba(128,128,128,.55);white-space:nowrap;letter-spacing:0.3px">转到“设置”以激活 Windows。</div>
<div id="bline"></div>
</body>
</html>
